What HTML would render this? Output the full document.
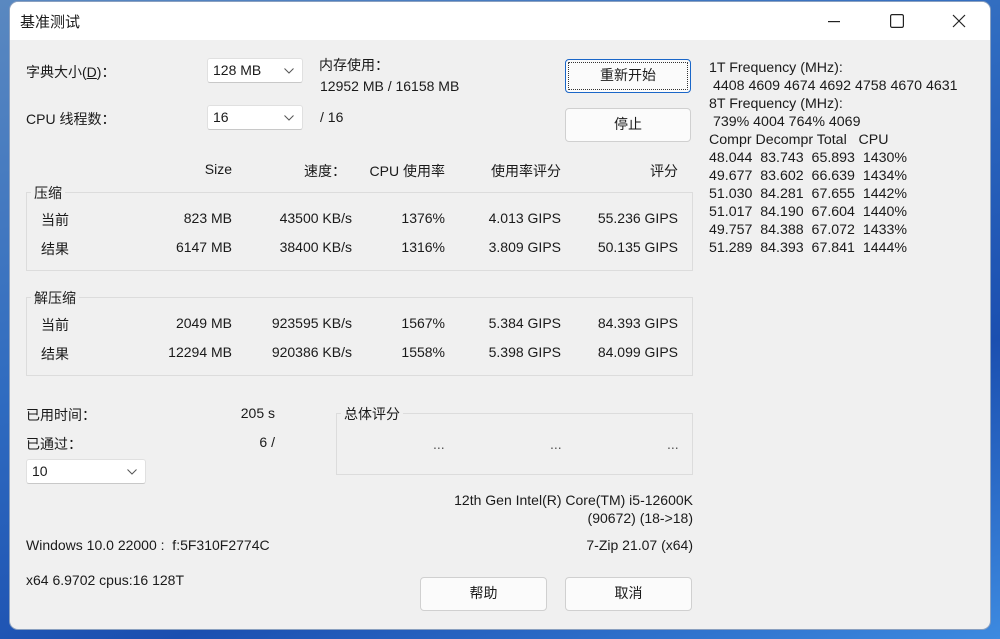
<!DOCTYPE html>
<html><head><meta charset="utf-8"><style>
body{margin:0;width:1000px;height:639px;overflow:hidden;background:linear-gradient(160deg,#5a88c0 0%,#2f6bc0 40%,#1b4fb0 70%,#3d8ae0 100%);font-family:"Liberation Sans","Noto Sans CJK SC",sans-serif;font-size:14px;color:#1a1a1a;position:relative}
#win{position:absolute;left:10px;top:2px;width:980px;height:627px;background:#f0f0f0;border-radius:8px;overflow:hidden;box-shadow:0 0 0 1px #8aa0c0}
#tb{position:absolute;left:0;top:0;width:980px;height:38px;background:#fff}
.a{position:absolute;white-space:pre}
.r{position:absolute;white-space:pre;text-align:right}
.cb{position:absolute;background:#fff;border:1px solid #e0e0e0;border-bottom-color:#c8c8c8;border-radius:3px;height:25px;box-sizing:border-box;padding:3px 0 0 5px}
.cb svg{position:absolute;right:8px;top:9px}
.btn{position:absolute;background:#fbfbfb;border:1px solid #d0d0d0;border-radius:4px;box-sizing:border-box;text-align:center;line-height:31px}
.gb{position:absolute;border:1px solid #dcdcdc;box-sizing:border-box}
.gl{position:absolute;background:#f0f0f0;padding:0 3px}
</style></head><body>
<div id="win">
<div id="tb">
<div class="a" style="left:10px;top:9px;font-size:15px">基准测试</div>
<svg style="position:absolute;left:818px;top:19px" width="12" height="2"><rect width="12" height="1.2" fill="#222"/></svg>
<svg style="position:absolute;left:880px;top:12px" width="14" height="14"><rect x="0.6" y="0.6" width="12.8" height="12.8" rx="1.5" fill="none" stroke="#222" stroke-width="1.2"/></svg>
<svg style="position:absolute;left:942px;top:12px" width="14" height="14"><path d="M1 1L13 13M13 1L1 13" stroke="#222" stroke-width="1.2"/></svg>
</div>
<div class="a" style="left:16px;top:60px">字典大小(<u>D</u>)：</div>
<div class="cb" style="left:197px;top:56px;width:96px">128 MB<svg width="10" height="6"><path d="M0.5 0.5L5 5L9.5 0.5" fill="none" stroke="#555"/></svg></div>
<div class="a" style="left:309px;top:53px">内存使用：</div>
<div class="a" style="left:310px;top:76px">12952 MB / 16158 MB</div>
<div class="a" style="left:16px;top:107px">CPU 线程数：</div>
<div class="cb" style="left:197px;top:103px;width:96px">16<svg width="10" height="6"><path d="M0.5 0.5L5 5L9.5 0.5" fill="none" stroke="#555"/></svg></div>
<div class="a" style="left:310px;top:107px">/ 16</div>
<div class="btn" style="left:555px;top:57px;width:126px;height:34px;border:1px solid #1a66c8;outline:1px dotted #333;outline-offset:-4px">重新开始</div>
<div class="btn" style="left:555px;top:106px;width:126px;height:34px">停止</div>
<div class="a" style="left:699px;top:57px;line-height:18px;font-size:14.2px">1T Frequency (MHz):
 4408 4609 4674 4692 4758 4670 4631
8T Frequency (MHz):
 739% 4004 764% 4069
Compr Decompr Total   CPU
48.044  83.743  65.893  1430%
49.677  83.602  66.639  1434%
51.030  84.281  67.655  1442%
51.017  84.190  67.604  1440%
49.757  84.388  67.072  1433%
51.289  84.393  67.841  1444%</div>
<div class="r" style="right:758px;top:159px">Size</div>
<div class="r" style="right:644px;top:159px">速度：</div>
<div class="r" style="right:545px;top:159px">CPU 使用率</div>
<div class="r" style="right:429px;top:159px">使用率评分</div>
<div class="r" style="right:312px;top:159px">评分</div>
<div class="gb" style="left:16px;top:190px;width:667px;height:79px"></div>
<div class="gl" style="left:21px;top:181px">压缩</div>
<div class="a" style="left:31px;top:208px">当前</div>
<div class="a" style="left:31px;top:237px">结果</div>
<div class="r" style="right:758px;top:208px">823 MB</div>
<div class="r" style="right:638px;top:208px">43500 KB/s</div>
<div class="r" style="right:545px;top:208px">1376%</div>
<div class="r" style="right:429px;top:208px">4.013 GIPS</div>
<div class="r" style="right:312px;top:208px">55.236 GIPS</div>
<div class="r" style="right:758px;top:237px">6147 MB</div>
<div class="r" style="right:638px;top:237px">38400 KB/s</div>
<div class="r" style="right:545px;top:237px">1316%</div>
<div class="r" style="right:429px;top:237px">3.809 GIPS</div>
<div class="r" style="right:312px;top:237px">50.135 GIPS</div>
<div class="gb" style="left:16px;top:295px;width:667px;height:79px"></div>
<div class="gl" style="left:21px;top:286px">解压缩</div>
<div class="a" style="left:31px;top:313px">当前</div>
<div class="a" style="left:31px;top:342px">结果</div>
<div class="r" style="right:758px;top:313px">2049 MB</div>
<div class="r" style="right:638px;top:313px">923595 KB/s</div>
<div class="r" style="right:545px;top:313px">1567%</div>
<div class="r" style="right:429px;top:313px">5.384 GIPS</div>
<div class="r" style="right:312px;top:313px">84.393 GIPS</div>
<div class="r" style="right:758px;top:342px">12294 MB</div>
<div class="r" style="right:638px;top:342px">920386 KB/s</div>
<div class="r" style="right:545px;top:342px">1558%</div>
<div class="r" style="right:429px;top:342px">5.398 GIPS</div>
<div class="r" style="right:312px;top:342px">84.099 GIPS</div>
<div class="a" style="left:16px;top:403px">已用时间：</div>
<div class="r" style="right:715px;top:403px">205 s</div>
<div class="a" style="left:16px;top:432px">已通过：</div>
<div class="r" style="right:715px;top:432px">6 /</div>
<div class="cb" style="left:16px;top:457px;width:120px">10<svg width="10" height="6"><path d="M0.5 0.5L5 5L9.5 0.5" fill="none" stroke="#555"/></svg></div>
<div class="gb" style="left:326px;top:411px;width:357px;height:62px"></div>
<div class="gl" style="left:331px;top:402px">总体评分</div>
<div class="a" style="left:423px;top:434px;color:#555">...</div>
<div class="a" style="left:540px;top:434px;color:#555">...</div>
<div class="a" style="left:657px;top:434px;color:#555">...</div>
<div class="r" style="right:297px;top:490px">12th Gen Intel(R) Core(TM) i5-12600K</div>
<div class="r" style="right:297px;top:508px">(90672) (18-&gt;18)</div>
<div class="a" style="left:16px;top:535px">Windows 10.0 22000 :  f:5F310F2774C</div>
<div class="r" style="right:297px;top:535px">7-Zip 21.07 (x64)</div>
<div class="a" style="left:16px;top:570px">x64 6.9702 cpus:16 128T</div>
<div class="btn" style="left:410px;top:575px;width:127px;height:34px">帮助</div>
<div class="btn" style="left:555px;top:575px;width:127px;height:34px">取消</div>
</div>
</body></html>
